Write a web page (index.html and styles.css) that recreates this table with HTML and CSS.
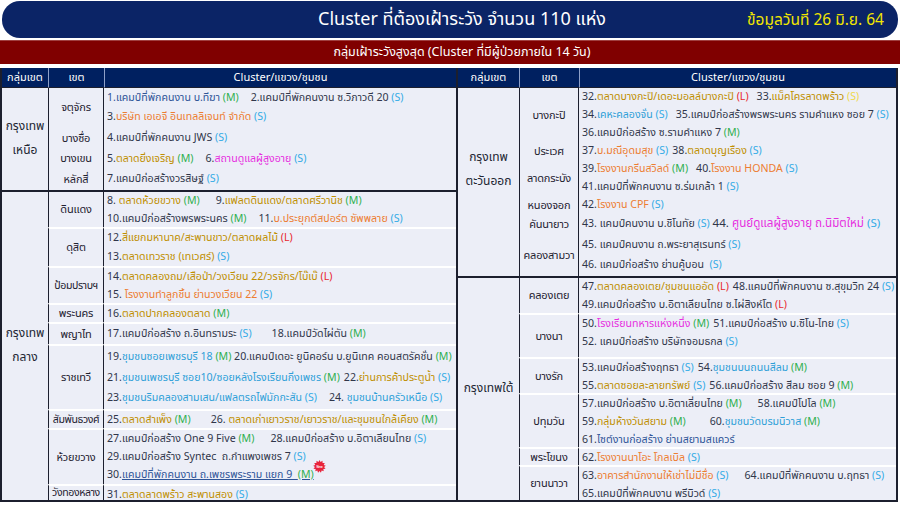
FILE: index.html
```html
<!DOCTYPE html>
<html lang="th">
<head>
<meta charset="utf-8">
<link rel="stylesheet" href="styles.css">
</head>
<body>
<div class="page">
  <div class="titlebar">
    <div class="title">Cluster ที่ต้องเฝ้าระวัง จำนวน 110 แห่ง</div>
    <div class="date">ข้อมูลวันที่ 26 มิ.ย. 64</div>
  </div>
  <div class="redbar">กลุ่มเฝ้าระวังสูงสุด (Cluster ที่มีผู้ป่วยภายใน 14 วัน)</div>
  <div class="tables">
    <div class="grid left">
      <div class="h">กลุ่มเขต</div><div class="h">เขต</div><div class="h">Cluster/แขวง/ชุมชน</div>

      <div class="g span4">กรุงเทพ<br>เหนือ</div>
      <div class="d">จตุจักร</div>
      <div class="c">
        <div class="ln"><span class="dk">1.แคมป์ที่พักคนงาน บ.ทีฆา</span> <span class="m">(M)</span><span class="sp2">2.แคมป์ที่พักคนงาน ซ.วิภาวดี 20</span> <span class="s">(S)</span></div>
        <div class="ln">3.<span class="o">บริษัท เอเอจี อินเทลลิเจนท์ จำกัด</span> <span class="s">(S)</span></div>
      </div>
      <div class="d">บางซื่อ</div>
      <div class="c"><div class="ln">4.แคมป์ที่พักคนงาน JWS <span class="s">(S)</span></div></div>
      <div class="d">บางเขน</div>
      <div class="c"><div class="ln">5.<span class="y">ตลาดยิ่งเจริญ</span> <span class="m">(M)</span><span class="sp2">6.</span><span class="p">สถานดูแลผู้สูงอายุ</span> <span class="s">(S)</span></div></div>
      <div class="d">หลักสี่</div>
      <div class="c"><div class="ln">7.แคมป์ก่อสร้างวรสิษฐ์ <span class="s">(S)</span></div></div>

      <div class="g gt span9">กรุงเทพ<br>กลาง</div>
      <div class="d gt">ดินแดง</div>
      <div class="c gt">
        <div class="ln">8. <span class="y">ตลาดห้วยขวาง</span> <span class="m">(M)</span><span class="sp5">9.</span><span class="y">แฟลตดินแดง/ตลาดศรีวานิช</span> <span class="m">(M)</span></div>
        <div class="ln">10.แคมป์ก่อสร้างพรพระนคร <span class="m">(M)</span><span class="sp2">11.</span><span class="o">บ.ประยุกต์สปอร์ต ซัพพลาย</span> <span class="s">(S)</span></div>
      </div>
      <div class="d w">ดุสิต</div>
      <div class="c w">
        <div class="ln">12.<span class="y">สี่แยกมหานาค/สะพานขาว/ตลาดผลไม้</span> <span class="l">(L)</span></div>
        <div class="ln">13.<span class="y">ตลาดเทวราช (เทเวศร์)</span> <span class="s">(S)</span></div>
      </div>
      <div class="d w tight">ป้อมปราบฯ</div>
      <div class="c w">
        <div class="ln">14.<span class="y">ตลาดคลองถม/เสือป่า/วงเวียน 22/วรจักร/โบ๊เบ๊</span> <span class="l">(L)</span></div>
        <div class="ln">15. <span class="o">โรงงานทำลูกชิ้น ย่านวงเวียน 22</span> <span class="s">(S)</span></div>
      </div>
      <div class="d w">พระนคร</div>
      <div class="c w"><div class="ln">16.<span class="y">ตลาดปากคลองตลาด</span> <span class="m">(M)</span></div></div>
      <div class="d w">พญาไท</div>
      <div class="c w"><div class="ln">17.แคมป์ก่อสร้าง ถ.อินทรามระ <span class="s">(S)</span><span class="sp3">18.แคมป์วัดไผ่ตัน</span> <span class="m">(M)</span></div></div>
      <div class="d w">ราชเทวี</div>
      <div class="c w">
        <div class="ln">19.<span class="b">ชุมชนซอยเพชรบุรี 18</span> <span class="m">(M)</span> 20.แคมป์เดอะ ยูนิคอร์น บ.ยูนิเทค คอนสตรัคชั่น <span class="m">(M)</span></div>
        <div class="ln">21.<span class="b">ชุมชนเพชรบุรี ซอย10/ซอยหลังโรงเรียนกิ่งเพชร</span> <span class="m">(M)</span><span class="sp0">22.</span><span class="y">ย่านการค้าประตูน้ำ</span> <span class="s">(S)</span></div>
        <div class="ln">23.<span class="b">ชุมชนริมคลองสามเสน/แฟลตรถไฟมักกะสัน</span> <span class="s">(S)</span><span class="sp2">24.</span><span class="b"> ชุมชนบ้านครัวเหนือ</span> <span class="s">(S)</span></div>
      </div>
      <div class="d w tight">สัมพันธวงศ์</div>
      <div class="c w"><div class="ln">25.<span class="y">ตลาดสำเพ็ง</span> <span class="m">(M)</span><span class="sp3">26. </span><span class="y">ตลาดเก่าเยาวราช/เยาวราช/และชุมชนใกล้เคียง</span> <span class="m">(M)</span></div></div>
      <div class="d w">ห้วยขวาง</div>
      <div class="c w">
        <div class="ln">27.แคมป์ก่อสร้าง One 9 Five <span class="m">(M)</span><span class="sp5">28.แคมป์ก่อสร้าง บ.อิตาเลียนไทย</span> <span class="s">(S)</span></div>
        <div class="ln">29.แคมป์ก่อสร้าง Syntec&nbsp; ถ.กำแพงเพชร 7 <span class="s">(S)</span></div>
        <div class="ln">30.<span class="u">แคมป์ที่พักคนงาน ถ.เพชรพระราม แยก 9&nbsp; <span class="m">(M)</span></span><span class="new"><svg viewBox="0 0 20 20" width="13" height="13"><polygon fill="#e8243c" points="10,0 11.6,3 14.6,1.2 14.7,4.6 18.1,4.5 16.5,7.5 19.7,8.9 17,10.9 19.3,13.4 15.9,14 16.5,17.3 13.3,16.3 12.2,19.5 10,17 7.8,19.5 6.7,16.3 3.5,17.3 4.1,14 0.7,13.4 3,10.9 0.3,8.9 3.5,7.5 1.9,4.5 5.3,4.6 5.4,1.2 8.4,3"/><text x="10" y="11.6" font-size="4.6" fill="#fff" text-anchor="middle" font-family="Liberation Sans, sans-serif" font-weight="bold">New</text></svg></span></div>
      </div>
      <div class="d w tight">วังทองหลาง</div>
      <div class="c w"><div class="ln">31.<span class="y">ตลาดลาดพร้าว สะพานสอง</span> <span class="s">(S)</span></div></div>
    </div>

    <div class="grid right">
      <div class="h">กลุ่มเขต</div><div class="h">เขต</div><div class="h">Cluster/แขวง/ชุมชน</div>

      <div class="g span6 east">กรุงเทพ<br>ตะวันออก</div>
      <div class="d">บางกะปิ</div>
      <div class="c">
        <div class="ln">32.<span class="y">ตลาดบางกะปิ/เดอะมอลล์บางกะปิ</span> <span class="l">(L)</span><span class="sp1">33.</span><span class="y">แม็คโครลาดพร้าว</span> <span class="ys">(S)</span></div>
        <div class="ln">34.<span class="b">เคหะคลองจั่น</span> <span class="s">(S)</span><span class="sp1">35.แคมป์ก่อสร้างพรพระนคร รามคำแหง ซอย 7</span> <span class="s">(S)</span></div>
        <div class="ln">36.แคมป์ก่อสร้าง ซ.รามคำแหง 7 <span class="m">(M)</span></div>
      </div>
      <div class="d">ประเวศ</div>
      <div class="c"><div class="ln">37.<span class="o">บ.มณีอุดมสุข</span> <span class="s">(S)</span><span class="sp0">38.</span><span class="y">ตลาดบุญเรือง</span> <span class="s">(S)</span></div></div>
      <div class="d">ลาดกระบัง</div>
      <div class="c">
        <div class="ln">39.<span class="o">โรงงานกรีนสวิลด์</span> <span class="m">(M)</span><span class="sp1">40.</span><span class="o">โรงงาน HONDA</span> <span class="s">(S)</span></div>
        <div class="ln">41.แคมป์ที่พักคนงาน ซ.ร่มเกล้า 1 <span class="s">(S)</span></div>
      </div>
      <div class="d">หนองจอก</div>
      <div class="c"><div class="ln">42.<span class="o">โรงงาน CPF</span> <span class="s">(S)</span></div></div>
      <div class="d">คันนายาว</div>
      <div class="c"><div class="ln">43. แคมป์คนงาน บ.ชิโนทัย <span class="s">(S)</span> <span class="big">44. <span class="p">ศูนย์ดูแลผู้สูงอายุ ถ.นิมิตใหม่</span> <span class="s">(S)</span></span></div></div>
      <div class="d">คลองสามวา</div>
      <div class="c">
        <div class="ln">45. แคมป์คนงาน ถ.พระยาสุเรนทร์ <span class="s">(S)</span></div>
        <div class="ln">46. แคมป์ก่อสร้าง ย่านคู้บอน&nbsp; <span class="s">(S)</span></div>
      </div>

      <div class="g gt span6">กรุงเทพใต้</div>
      <div class="d gt">คลองเตย</div>
      <div class="c gt">
        <div class="ln">47.<span class="y">ตลาดคลองเตย/ชุมชนแออัด</span> <span class="l">(L)</span><span class="sp0">48.แคมป์ที่พักคนงาน ซ.สุขุมวิท 24</span> <span class="s">(S)</span></div>
        <div class="ln">49.แคมป์ก่อสร้าง บ.อิตาเลียนไทย ซ.ไผ่สิงห์โต <span class="l">(L)</span></div>
      </div>
      <div class="d w">บางนา</div>
      <div class="c w top">
        <div class="ln">50.<span class="p">โรงเรียนทหารแห่งหนึ่ง</span> <span class="m">(M)</span><span class="sp0">51.แคมป์ก่อสร้าง บ.ซิโน-ไทย</span> <span class="s">(S)</span></div>
        <div class="ln">52. แคมป์ก่อสร้าง บริษัทจอมธกล <span class="s">(S)</span></div>
      </div>
      <div class="d w">บางรัก</div>
      <div class="c w">
        <div class="ln">53.แคมป์ก่อสร้างฤทธา <span class="s">(S)</span><span class="sp0">54.</span><span class="b">ชุมชนบนถนนสีลม</span> <span class="m">(M)</span></div>
        <div class="ln">55.<span class="y">ตลาดซอยละลายทรัพย์</span> <span class="s">(S)</span><span class="sp0">56.แคมป์ก่อสร้าง สีลม ซอย 9</span> <span class="m">(M)</span></div>
      </div>
      <div class="d w">ปทุมวัน</div>
      <div class="c w">
        <div class="ln">57.แคมป์ก่อสร้าง บ.อิตาเลี่ยนไทย <span class="m">(M)</span><span class="sp5">58.แคมป์โปโล</span> <span class="m">(M)</span></div>
        <div class="ln">59.<span class="y">กลุ่มห้างวันสยาม</span> <span class="m">(M)</span><span class="sp4">60.</span><span class="b">ชุมชนวัดบรมนิวาส</span> <span class="m">(M)</span></div>
        <div class="ln">61.<span class="dk">ไซต์งานก่อสร้าง ย่านสยามสแควร์</span></div>
      </div>
      <div class="d w">พระโขนง</div>
      <div class="c w"><div class="ln">62.<span class="o">โรงงานนาโอะ โกลเบิล</span> <span class="s">(S)</span></div></div>
      <div class="d w">ยานนาวา</div>
      <div class="c w">
        <div class="ln">63.<span class="o">อาคารสำนักงานให้เช่าไม่มีชื่อ</span> <span class="s">(S)</span><span class="sp5">64.แคมป์ที่พักคนงาน บ.ฤทธา</span> <span class="s">(S)</span></div>
        <div class="ln">65.แคมป์ที่พักคนงาน พรีบิวด์ <span class="s">(S)</span></div>
      </div>
    </div>
  </div>
</div>
</body>
</html>
```
FILE: styles.css
```css
* { box-sizing: border-box; }
html, body { margin: 0; padding: 0; background: #ffffff; }
.page {
  width: 900px;
  height: 506px;
  overflow: hidden;
  font-family: "Noto Sans Thai", "Noto Sans", "DejaVu Sans", sans-serif;
  color: #30364a;
}
.titlebar {
  margin: 1px 2px 0 2px;
  height: 37px;
  background: #0b2466;
  border-radius: 18px;
  position: relative;
  display: flex;
  align-items: center;
  justify-content: center;
}
.title {
  color: #ffffff;
  font-size: 18px;
  font-family: "Liberation Sans Narrow", "Noto Sans Thai", "Noto Sans", sans-serif;
  padding-left: 24px;
}
.date {
  position: absolute;
  right: 14px;
  top: 8px;
  color: #f2e600;
  font-size: 15.5px;
  font-family: "Liberation Sans Narrow", "Noto Sans Thai", "Noto Sans", sans-serif;
}
.redbar {
  margin-top: 2px;
  height: 24px;
  background: #800000;
  color: #ffffff;
  font-size: 12.5px;
  display: flex;
  align-items: center;
  justify-content: center;
  padding-left: 24px;
  border-top: 1px solid #a04040;
}
.tables {
  margin-top: 4px;
  display: flex;
  align-items: flex-start;
}
.grid {
  display: grid;
  border-bottom: 2px solid #1c1f2e;
  background: #eceef7;
}
.left {
  width: 458px;
  grid-template-columns: 46px 56px 1fr;
  grid-template-rows: 20px 39px 22px 19px 22px 37px 39px 37px 19px 22px 65px 19px 56px 16px;
  border-left: 2px solid #1c1f2e;
  border-right: 2px solid #1c1f2e;
}
.right {
  width: 440px;
  grid-template-columns: 61px 60px 1fr;
  grid-template-rows: 20px 54px 18px 36px 18px 20px 42px 37px 44px 36px 54px 18px 35px;
  border-right: 2px solid #1c1f2e;
}
.h {
  background: #002060;
  color: #ffffff;
  font-size: 11px;
  display: flex;
  align-items: center;
  justify-content: center;
  border-left: 1px solid #8ea0c8;
  border-bottom: 1px solid #1c1f2e;
}
.h:first-child { border-left: none; }
.span4 { grid-row: span 4; }
.span6 { grid-row: span 6; }
.span9 { grid-row: span 9; }
.g {
  display: flex;
  align-items: center;
  justify-content: center;
  text-align: center;
  font-size: 12px;
  line-height: 24px;
  color: #222633;
  padding-bottom: 2px;
}
.east { padding-bottom: 26px; }
.d {
  display: flex;
  align-items: center;
  justify-content: center;
  font-size: 11px;
  letter-spacing: -0.2px;
  white-space: nowrap;
  color: #1e2130;
  border-left: 1px solid #1c1f2e;
  border-right: 1px solid #1c1f2e;
  overflow: hidden;
}
.d.tight { font-size: 10.6px; letter-spacing: -0.4px; }
.c {
  display: flex;
  flex-direction: column;
  justify-content: space-evenly;
  padding-left: 3px;
  font-size: 10.6px;
  white-space: nowrap;
}
.c.top { justify-content: flex-start; }
.ln { line-height: 18px; height: 18px; }
.gt { border-top: 2px solid #1c1f2e; }
.w { border-top: 2px solid #ffffff; }
.dk { color: #2f5597; }
.y { color: #bf8f00; }
.o { color: #ed7d31; }
.p { color: #e62ee0; }
.b { color: #2e9fd8; }
.m { color: #2fb050; }
.s { color: #33abe6; }
.ys { color: #f0d84a; }
.l { color: #e8262e; }
.u { color: #2f5597; text-decoration: underline; }
.sp0 { margin-left: 4px; }
.sp1 { margin-left: 8px; }
.sp2 { margin-left: 12px; }
.sp5 { margin-left: 16px; }
.sp3 { margin-left: 20px; }
.sp4 { margin-left: 24px; }
.big { font-size: 11.6px; }
.new { position: relative; }
.new svg { position: absolute; left: -1px; top: -7px; }
```
